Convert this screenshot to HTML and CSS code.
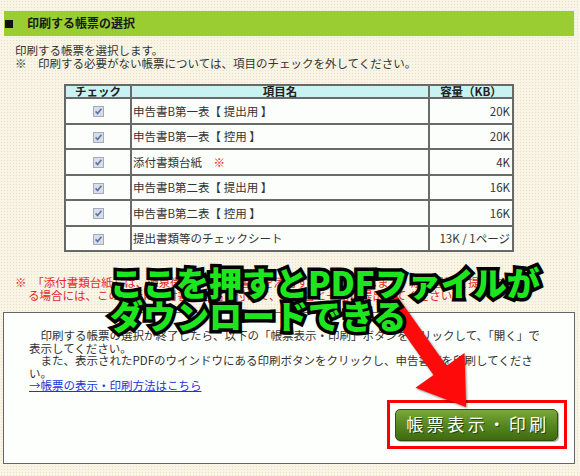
FILE: index.html
```html
<!DOCTYPE html>
<html lang="ja">
<head>
<meta charset="utf-8">
<title>印刷する帳票の選択</title>
<link rel="stylesheet" href="styles.css">
</head>
<body>
<div class="page">
  <div class="section-head"><span class="sq"></span><span class="section-title">印刷する帳票の選択</span></div>
  <p class="intro">印刷する帳票を選択します。<br>※　印刷する必要がない帳票については、項目のチェックを外してください。</p>

  <table class="forms">
    <thead>
      <tr><th class="c-check">チェック</th><th class="c-name">項目名</th><th class="c-size">容量（KB）</th></tr>
    </thead>
    <tbody>
      <tr><td class="c-check"><span class="cb"><svg viewBox="0 0 11 11" width="11" height="11"><rect x="0.5" y="0.5" width="10" height="10" fill="#d9dde6" stroke="#a4abbb"/><path d="M2.6 5.4 L4.6 7.6 L8.4 2.8" fill="none" stroke="#5b74aa" stroke-width="1.6"/></svg></span></td><td class="c-name">申告書B第一表【 提出用 】</td><td class="c-size">20K</td></tr>
      <tr><td class="c-check"><span class="cb"><svg viewBox="0 0 11 11" width="11" height="11"><rect x="0.5" y="0.5" width="10" height="10" fill="#d9dde6" stroke="#a4abbb"/><path d="M2.6 5.4 L4.6 7.6 L8.4 2.8" fill="none" stroke="#5b74aa" stroke-width="1.6"/></svg></span></td><td class="c-name">申告書B第一表【 控用 】</td><td class="c-size">20K</td></tr>
      <tr><td class="c-check"><span class="cb"><svg viewBox="0 0 11 11" width="11" height="11"><rect x="0.5" y="0.5" width="10" height="10" fill="#d9dde6" stroke="#a4abbb"/><path d="M2.6 5.4 L4.6 7.6 L8.4 2.8" fill="none" stroke="#5b74aa" stroke-width="1.6"/></svg></span></td><td class="c-name">添付書類台紙　<span class="mark">※</span></td><td class="c-size">4K</td></tr>
      <tr><td class="c-check"><span class="cb"><svg viewBox="0 0 11 11" width="11" height="11"><rect x="0.5" y="0.5" width="10" height="10" fill="#d9dde6" stroke="#a4abbb"/><path d="M2.6 5.4 L4.6 7.6 L8.4 2.8" fill="none" stroke="#5b74aa" stroke-width="1.6"/></svg></span></td><td class="c-name">申告書B第二表【 提出用 】</td><td class="c-size">16K</td></tr>
      <tr><td class="c-check"><span class="cb"><svg viewBox="0 0 11 11" width="11" height="11"><rect x="0.5" y="0.5" width="10" height="10" fill="#d9dde6" stroke="#a4abbb"/><path d="M2.6 5.4 L4.6 7.6 L8.4 2.8" fill="none" stroke="#5b74aa" stroke-width="1.6"/></svg></span></td><td class="c-name">申告書B第二表【 控用 】</td><td class="c-size">16K</td></tr>
      <tr><td class="c-check"><span class="cb"><svg viewBox="0 0 11 11" width="11" height="11"><rect x="0.5" y="0.5" width="10" height="10" fill="#d9dde6" stroke="#a4abbb"/><path d="M2.6 5.4 L4.6 7.6 L8.4 2.8" fill="none" stroke="#5b74aa" stroke-width="1.6"/></svg></span></td><td class="c-name">提出書類等のチェックシート</td><td class="c-size">13K / 1ページ</td></tr>
    </tbody>
  </table>

  <p class="note">※　「添付書類台紙」は、源泉徴収票などの書類を添付する際に使用します。添付書類を提出す<br>る場合には、この台紙に添付書類を貼り付けて、申告書と一緒に提出してください。</p>

  <div class="print-box">
    <p class="guide">　印刷する帳票の選択が終了したら、以下の「帳票表示・印刷」ボタンをクリックして、「開く」で<br>表示してください。<br>　また、表示されたPDFのウインドウにある印刷ボタンをクリックし、申告書等を印刷してくださ<br>い。<br><a class="how" href="#">→帳票の表示・印刷方法はこちら</a></p>
    <div class="btn-row">
      <div class="btn-frame"><span class="btn">帳票表示・印刷</span></div>
    </div>
  </div>
</div>

<svg class="arrow" viewBox="0 0 580 476" width="580" height="476">
  <polygon points="394.5,292.4 446.5,365.7 464.5,353 466,407 415.5,387.7 433.5,374.9 381.5,301.6" fill="#ff0a0a"/>
</svg>
<div class="callout">ここを押すとPDFファイルが<br>ダウンロードできる</div>
</body>
</html>
```

FILE: styles.css
```css
html, body {
  margin: 0;
  padding: 0;
}
body {
  width: 580px;
  height: 476px;
  overflow: hidden;
  position: relative;
  background-color: #f8f4e6;
  background-image: radial-gradient(circle, #eadfc0 0.7px, transparent 0.9px);
  background-size: 3px 3px;
  font-family: "Noto Sans CJK JP", "Noto Sans", sans-serif;
  font-size: 11.5px;
  line-height: 12.5px;
  color: #333;
}
.page {
  padding-top: 11px;
}
.section-head {
  display: flex;
  align-items: center;
  height: 25px;
  margin: 0 6px 0 4px;
  background: #9acd32;
}
.sq {
  width: 8px;
  height: 8px;
  background: #111;
  margin-left: 1px;
}
.section-title {
  margin-left: 14px;
  font-weight: bold;
  font-size: 12px;
  color: #1a1a1a;
}
.intro {
  margin: 8px 0 0 15px;
}
.forms {
  margin: 15px 0 0 64px;
  width: 450px;
  border-collapse: separate;
  border-spacing: 0;
  border: 1px solid #666;
  background: #fcfefc;
}
.forms th, .forms td {
  border: 1px solid #6a6a6a;
  padding: 0;
}
.forms th {
  height: 11px;
  line-height: 11px;
  background: #c9f3f3;
  font-weight: bold;
  color: #222;
  text-align: center;
}
.forms td {
  height: 23.5px;
}
.c-check { width: 64px; text-align: center; }
.c-name { width: 295px; }
td.c-name { padding-left: 1px; }
td.c-size { text-align: right; padding-right: 2px; }
.cb {
  display: inline-flex;
  vertical-align: middle;
}
.mark { color: #e02020; }
.note {
  margin: 24px 0 0 0;
  padding-left: 28px;
  text-indent: -13px;
  color: #e42a2a;
}
.print-box {
  margin: 11px 5px 0 3px;
  border: 1px solid #666;
  background: #fdfffd;
  padding: 16px 7px 14px 25px;
}
.guide {
  margin: 0;
  white-space: nowrap;
}
.how {
  color: #2233dd;
  text-decoration: underline;
}
.btn-row {
  display: flex;
  justify-content: flex-end;
  margin-top: 8px;
}
.btn-frame {
  border: 3px solid #ff0000;
  background: #fff;
  padding: 6px 6px 5px 5px;
}
.btn {
  display: flex;
  align-items: center;
  justify-content: center;
  width: 161px;
  height: 30px;
  border: 1px solid #2f4f0c;
  border-radius: 5px;
  background: linear-gradient(#7ba83a, #5a8a22 45%, #3e6b10);
  box-shadow: 1px 1px 1px rgba(0,0,0,0.35);
  color: #fff;
  font-size: 17px;
  letter-spacing: 3.5px;
  text-indent: 3px;
  text-shadow: 1px 1px 0 #2a4508;
}
.arrow {
  position: absolute;
  left: 0;
  top: 0;
  filter: drop-shadow(1px 1px 1px rgba(0,0,0,0.5));
}
.callout {
  position: absolute;
  left: 110px;
  top: 266px;
  font-size: 33px;
  line-height: 33px;
  font-weight: 900;
  color: #1ee61e;
  -webkit-text-stroke: 7px #000;
  paint-order: stroke fill;
  text-shadow: 2px 2px 2px #000;
  white-space: nowrap;
}
```
